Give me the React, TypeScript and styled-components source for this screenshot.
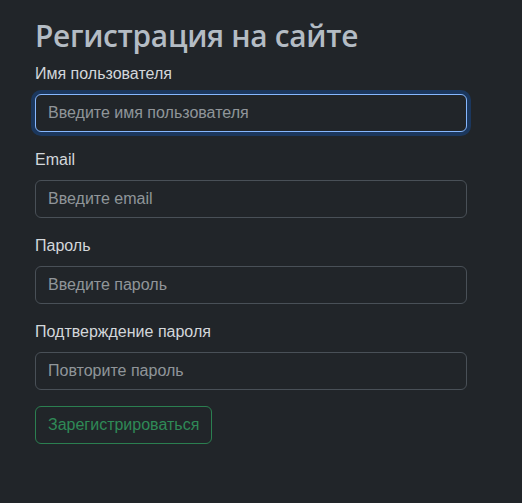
import styled, { createGlobalStyle } from 'styled-components';

const GlobalStyle = createGlobalStyle`
    html, body {
        margin: 0;
        padding: 0;
        background-color: #212529;
    }
    body {
        font-family: "Liberation Sans", Arial, sans-serif;
        color: #dee2e6;
        font-size: 16px;
        line-height: 1.5;
    }
    * { box-sizing: border-box; }
`;

const Page = styled.div`
    min-height: 503px;
    padding: 18px 0 0 35px;
`;

const Form = styled.form`
    width: 432px;
    display: flex;
    flex-direction: column;
`;

const Title = styled.h1`
    margin: 0 0 8px 0;
    font-family: "Open Sans", sans-serif;
    font-size: 29.83px;
    font-weight: 600;
    line-height: 1.2;
    letter-spacing: -0.3px;
    color: #b4bcc4;
`;

const Field = styled.div`
    display: flex;
    flex-direction: column;
    margin-bottom: 16px;
`;

const Label = styled.label`
    margin-bottom: 8px;
    line-height: 24px;
    color: #d3d7db;
`;

interface InputProps {
    $focused?: boolean;
}
const Input = styled.input<InputProps>`
    height: 38px;
    padding: 6px 12px;
    font-family: inherit;
    font-size: 16px;
    color: #dee2e6;
    background-color: #212529;
    border: 1px solid ${p => p.$focused ? '#86b7fe' : '#495057'};
    border-radius: 6px;
    outline: none;
    ${p => p.$focused ? 'box-shadow: 0 0 0 4px rgba(13, 110, 253, 0.25);' : ''}

    &::placeholder {
        color: rgba(222, 226, 230, 0.6);
    }
`;

const SubmitButton = styled.button`
    align-self: flex-start;
    height: 38px;
    padding: 6px 12px;
    font-family: inherit;
    font-size: 16px;
    line-height: 1.5;
    color: #2f8a57;
    background: transparent;
    border: 1px solid #2b7f50;
    border-radius: 6px;
`;

const fields = [
    { id: 'username', label: 'Имя пользователя', placeholder: 'Введите имя пользователя', type: 'text', focused: true },
    { id: 'email', label: 'Email', placeholder: 'Введите email', type: 'email' },
    { id: 'password', label: 'Пароль', placeholder: 'Введите пароль', type: 'password' },
    { id: 'confirm', label: 'Подтверждение пароля', placeholder: 'Повторите пароль', type: 'password' },
];

const App: React.FC = () => {
    return (
        <Page>
            <GlobalStyle />
            <Form onSubmit={e => e.preventDefault()}>
                <Title>Регистрация на сайте</Title>
                {fields.map(f => (
                    <Field key={f.id}>
                        <Label htmlFor={f.id}>{f.label}</Label>
                        <Input id={f.id} type={f.type} placeholder={f.placeholder} $focused={f.focused} />
                    </Field>
                ))}
                <SubmitButton type="submit">Зарегистрироваться</SubmitButton>
            </Form>
        </Page>
    );
}

export default App;
